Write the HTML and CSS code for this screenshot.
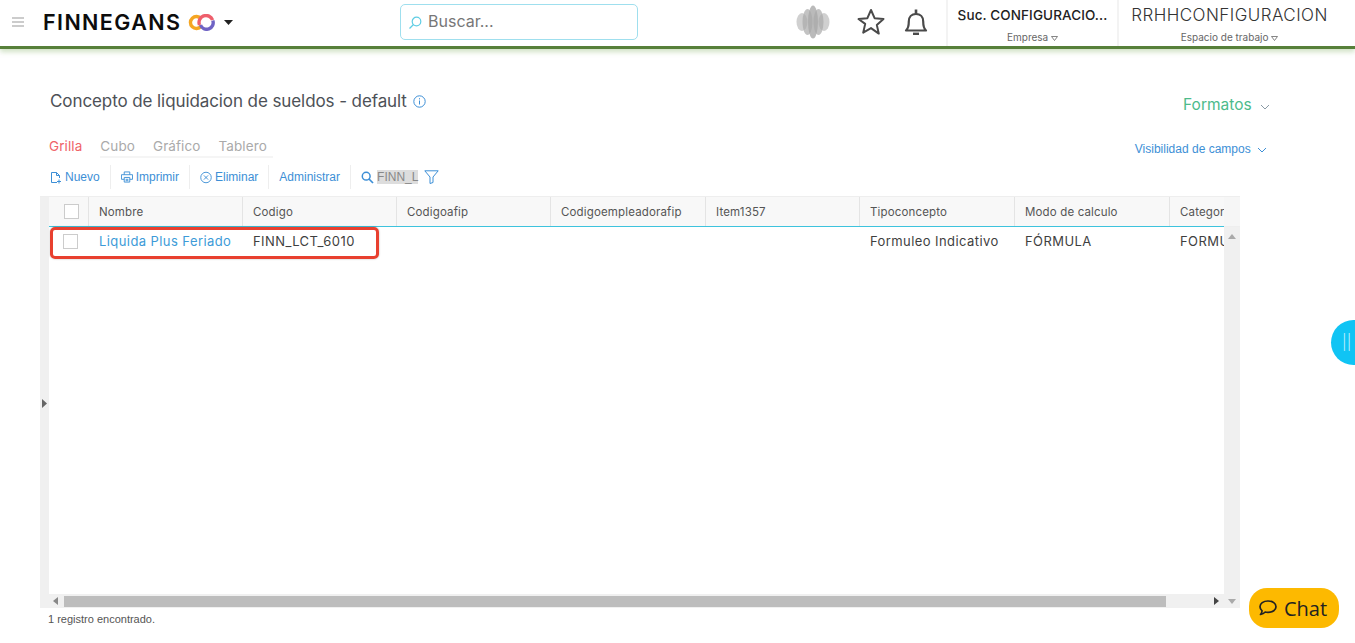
FILE: index.html
```html
<!DOCTYPE html>
<html lang="es">
<head>
<meta charset="utf-8">
<title>Concepto de liquidacion de sueldos</title>
<link rel="stylesheet" href="styles.css">
</head>
<body>
<header class="topbar">
  <div class="brand">
    <svg class="burger" width="12" height="10" viewBox="0 0 12 10"><path d="M0 1h12M0 5h12M0 9h12" stroke="#999" stroke-width="1"/></svg>
    <span class="logo-text">FINNEGANS</span>
    <svg class="logo-mark" width="28" height="17" viewBox="0 0 28 17" fill="none"><path d="M13 4.600A6 6 0 1 0 13 12.400" stroke="#f5a623" stroke-width="3.400"/><path d="M11.500 11A6 6 0 0 1 24.600 6" stroke="#ee5f6c" stroke-width="3.400"/><path d="M24.800 6.500A6 6 0 0 1 12.500 11" stroke="#6f63c4" stroke-width="3.400"/></svg>
    <svg class="caret" width="9" height="5" viewBox="0 0 9 5"><path d="M0 0h9L4.500 5z" fill="#222"/></svg>
  </div>
  <div class="search">
    <svg width="14" height="14" viewBox="0 0 14 14" fill="none"><circle cx="8.500" cy="5.500" r="4.300" stroke="#5fcde4" stroke-width="1.200"/><path d="M5.500 8.500L1.500 12.500" stroke="#5fcde4" stroke-width="1.200"/></svg>
    <span>Buscar...</span>
  </div>
  <div class="top-actions">
    <svg class="orb" width="34" height="34" viewBox="0 0 34 34"><g fill="#a9a9a9"><ellipse cx="6" cy="17" rx="5.500" ry="9" opacity=".55"/><ellipse cx="11.500" cy="17" rx="5" ry="13" opacity=".7"/><ellipse cx="17" cy="17" rx="5" ry="16.500" opacity=".8"/><ellipse cx="22.500" cy="17" rx="5" ry="13" opacity=".7"/><ellipse cx="28" cy="17" rx="5.500" ry="9" opacity=".55"/></g></svg>
    <svg class="star" width="28" height="27" viewBox="0 0 28 27" fill="none"><path d="M14 2l3.600 8.200 8.900.8-6.700 5.900 2 8.700L14 20.100l-7.800 4.500 2-8.700L1.500 11l8.900-.8z" stroke="#4a4a4a" stroke-width="2" stroke-linejoin="round"/></svg>
    <svg class="bell" width="24" height="27" viewBox="0 0 24 27" fill="none"><path d="M2 22.500c2.300-2 2.800-4.500 2.800-9 0-4.500 2.900-7.500 7.200-7.500s7.200 3 7.200 7.500c0 4.500.5 7 2.800 9z" stroke="#4a4a4a" stroke-width="2.200" stroke-linejoin="round"/><path d="M12 1.500v4.500" stroke="#4a4a4a" stroke-width="2.600"/><path d="M9 25.800h6" stroke="#4a4a4a" stroke-width="2.400"/></svg>
  </div>
  <div class="ctx ctx-company">
    <span class="ctx-main ctx-bold">Suc. CONFIGURACIO...</span>
    <span class="ctx-sub">Empresa <svg width="7" height="5" viewBox="0 0 7 5" fill="none"><path d="M.5.500h6L3.500 4.500z" stroke="#666" stroke-width=".8"/></svg></span>
  </div>
  <div class="ctx ctx-space">
    <span class="ctx-main">RRHHCONFIGURACION</span>
    <span class="ctx-sub">Espacio de trabajo <svg width="7" height="5" viewBox="0 0 7 5" fill="none"><path d="M.5.500h6L3.500 4.500z" stroke="#666" stroke-width=".8"/></svg></span>
  </div>
</header>

<main class="page">
  <div class="title-row">
    <h1 class="title">Concepto de liquidacion de sueldos - default</h1>
    <svg class="info" width="13" height="13" viewBox="0 0 13 13" fill="none"><circle cx="6.500" cy="6.500" r="5.700" stroke="#3d8fd6" stroke-width="1"/><path d="M6.500 5.500v4M6.500 3.200v1.200" stroke="#3d8fd6" stroke-width="1"/></svg>
    <span class="formats">Formatos <svg width="10" height="6" viewBox="0 0 10 6" fill="none"><path d="M1 1l4 4 4-4" stroke="#8a9aa5" stroke-width="1"/></svg></span>
  </div>

  <div class="tabs-row">
    <nav class="tabs">
      <span class="tab tab-active">Grilla</span>
      <span class="tab-group"><span class="tab">Cubo</span><span class="tab">Gráfico</span><span class="tab">Tablero</span></span>
    </nav>
    <span class="visibility">Visibilidad de campos <svg width="10" height="6" viewBox="0 0 10 6" fill="none"><path d="M1 1l4 4 4-4" stroke="#3d8fd6" stroke-width="1"/></svg></span>
  </div>

  <div class="toolbar">
    <span class="tool"><svg width="12" height="13" viewBox="0 0 12 13" fill="none"><path d="M7 11.500H1.500v-10h5l3 3V7M6.500 1.500v3h3M9 8.500v4M7 10.500h4" stroke="#3d8fd6" stroke-width="1"/></svg>Nuevo</span>
    <span class="tool"><svg width="12" height="12" viewBox="0 0 13 12" fill="none"><path d="M3.500 3.500v-3h6v3M3.500 8.500h-3v-5h12v5h-3M3.500 6.500h6v5h-6zM5 8.500h3M5 10h3" stroke="#3d8fd6" stroke-width="1"/></svg>Imprimir</span>
    <span class="tool"><svg width="12" height="13" viewBox="0 0 13 13" fill="none"><circle cx="6.500" cy="6.500" r="5.700" stroke="#3d8fd6" stroke-width="1"/><path d="M4.200 4.200l4.600 4.600M8.800 4.200l-4.600 4.600" stroke="#3d8fd6" stroke-width="1"/></svg>Eliminar</span>
    <span class="tool">Administrar</span>
    <span class="tool tool-last"><svg width="13" height="13" viewBox="0 0 13 13" fill="none"><circle cx="5.200" cy="5.200" r="3.900" stroke="#3d8fd6" stroke-width="1.500"/><path d="M8 8l4 4" stroke="#3d8fd6" stroke-width="1.700"/></svg><span class="filter-value">FINN_L</span><svg class="funnel" width="15" height="14" viewBox="0 0 15 14" fill="none"><path d="M.8.800h13.400L9 7v5.500l-3 1V7z" stroke="#3d8fd6" stroke-width="1"/></svg></span>
  </div>

  <section class="grid-wrap">
    <div class="grid-side"><svg width="5" height="9" viewBox="0 0 5 9"><path d="M0 0l5 4.500L0 9z" fill="#666"/></svg></div>
    <div class="grid-body">
      <div class="grid-view">
        <div class="row head-row">
          <div class="cell cell-check"><span class="check"></span></div>
          <div class="cell">Nombre</div>
          <div class="cell">Codigo</div>
          <div class="cell">Codigoafip</div>
          <div class="cell">Codigoempleadorafip</div>
          <div class="cell">Item1357</div>
          <div class="cell">Tipoconcepto</div>
          <div class="cell">Modo de calculo</div>
          <div class="cell cell-clip">Categoria</div>
        </div>
        <div class="row data-row">
          <div class="cell cell-check"><span class="check"></span></div>
          <div class="cell cell-link">Liquida Plus Feriado</div>
          <div class="cell">FINN_LCT_6010</div>
          <div class="cell"></div>
          <div class="cell"></div>
          <div class="cell"></div>
          <div class="cell">Formuleo Indicativo</div>
          <div class="cell">FÓRMULA</div>
          <div class="cell cell-clip">FORMULA</div>
        </div>
        <div class="highlight"></div>
      </div>
      <div class="vscroll">
        <div class="vscroll-head"></div>
        <svg class="arrow-up" width="8" height="5" viewBox="0 0 8 5"><path d="M0 5l4-5 4 5z" fill="#aaa"/></svg>
      </div>
      <div class="hscroll">
        <svg width="5" height="8" viewBox="0 0 5 8"><path d="M5 0v8L0 4z" fill="#888"/></svg>
        <div class="hscroll-track"><div class="hscroll-thumb"></div></div>
        <svg width="5" height="8" viewBox="0 0 5 8"><path d="M0 0v8l5-4z" fill="#444"/></svg>
        <svg class="arrow-down" width="8" height="5" viewBox="0 0 8 5"><path d="M0 0l4 5 4-5z" fill="#aaa"/></svg>
      </div>
    </div>
  </section>
  <p class="status">1 registro encontrado.</p>
</main>

<div class="side-pill"><span>||</span></div>
<div class="chat">
  <svg width="20" height="18" viewBox="0 0 20 18" fill="none"><path d="M10 2c4.700 0 8 2.500 8 5.700s-3.300 5.700-8 5.700c-1 0-2-.1-2.800-.4-1 1-2.500 2-4.700 2.500 1-1.100 1.500-2.300 1.600-3.700C2.900 10.800 2 9.300 2 7.700 2 4.500 5.300 2 10 2z" stroke="#222" stroke-width="1.700" stroke-linejoin="round"/></svg>
  <span>Chat</span>
</div>
</body>
</html>
```
FILE: styles.css
```css
* { box-sizing: border-box; }
html, body { margin: 0; height: 100%; overflow: hidden; }
body {
  position: relative;
  background: #fff;
  font-family: "Inter", "Liberation Sans", sans-serif;
  color: #444;
}

/* Top bar */
.topbar {
  display: flex;
  align-items: stretch;
  height: 49px;
  background: #fff;
  border-bottom: 3px solid #57803a;
  box-shadow: 0 3px 5px rgba(120, 170, 90, .35);
}
.brand {
  display: flex;
  align-items: center;
  width: 400px;
  padding: 0 0 2px 12px;
}
.burger { margin-right: 19px; }
.logo-text {
  font-size: 21.500px;
  font-weight: 600;
  color: #0c0c0c;
  letter-spacing: 1.400px;
  width: 140px;
  white-space: nowrap;
}
.logo-mark { margin-left: 5px; }
.caret { margin-left: 8px; }
.search {
  display: flex;
  align-items: center;
  gap: 6px;
  width: 238px;
  height: 36px;
  margin-top: 4px;
  padding: 0 0 2px 7px;
  border: 1px solid #9fdfee;
  border-radius: 5px;
  font-size: 16px;
  color: #777;
}
.search svg { margin-top: 4px; }
.top-actions {
  display: flex;
  align-items: center;
  width: 310px;
  padding: 0 0 3px 158px;
  border-right: 2px solid #f3f3f3;
}
.orb { flex: none; margin-right: 27px; }
.star { flex: none; margin-right: 19px; }
.bell { flex: none; }
.ctx {
  display: flex;
  flex-direction: column;
  align-items: center;
  white-space: nowrap;
  padding-top: 7px;
}
.ctx-company { width: 171px; border-right: 2px solid #f3f3f3; }
.ctx-space { width: 217px; }
.ctx-main { font-size: 14px; line-height: 17px; }
.ctx-space .ctx-main { font-size: 17px; font-weight: 300; letter-spacing: .45px; color: #333; margin-right: -4px; }
.ctx-bold { font-weight: 500; color: #222; font-size: 13.500px; letter-spacing: .1px; }
.ctx-sub { margin-top: 7px; font-size: 10px; line-height: 12px; color: #666; }
.ctx-space .ctx-sub { margin-right: -4px; }

/* Page */
.page { padding: 39px 0 0 40px; }
.title-row {
  display: flex;
  align-items: center;
  height: 26px;
  padding-left: 10px;
  width: 1230px;
}
.title {
  margin: 0;
  font-size: 17px;
  font-weight: 400;
  letter-spacing: -.09px;
  color: #4d5157;
  white-space: nowrap;
}
.info { margin-left: 6px; }
.formats {
  margin-left: auto;
  padding-top: 6px;
  font-size: 15.500px;
  color: #4dbb8b;
  white-space: nowrap;
}
.formats svg { margin-left: 4px; }
.tabs-row {
  display: flex;
  align-items: flex-start;
  justify-content: space-between;
  margin-top: 21px;
  padding-left: 9px;
  width: 1227px;
}
.tabs { display: flex; align-items: flex-start; font-size: 13.500px; letter-spacing: .1px; }
.tab { color: #aaa; white-space: nowrap; }
.tab-active { color: #ef6269; margin-right: 18px; line-height: 22px; }
.tab-group {
  display: flex;
  gap: 18px;
  padding-right: 6px;
  height: 23px;
  line-height: 22px;
  border-bottom: 2px solid #f5f5f5;
}
.visibility {
  padding-top: 7px;
  font: 12px "Liberation Sans", sans-serif;
  color: #3d8fd6;
  white-space: nowrap;
}
.visibility svg { margin-left: 3px; }
.toolbar {
  display: flex;
  align-items: center;
  height: 28px;
  margin-top: 5px;
  padding-left: 10px;
  font: 12px "Liberation Sans", sans-serif;
  color: #3d8fd6;
}
.tool {
  display: flex;
  align-items: center;
  gap: 3px;
  height: 24px;
  padding-right: 10px;
  margin-right: 10px;
  border-right: 1px solid #eee;
  white-space: nowrap;
}
.tool-last { border-right: 0; margin-right: 0; }
.filter-value { background: #ddd; color: #888; line-height: 14px; }
.funnel { margin-left: 3px; }

/* Grid */
.grid-wrap {
  display: flex;
  width: 1200px;
  height: 412px;
  margin-top: 5px;
  border-top: 1px solid #eee;
}
.grid-side {
  display: flex;
  align-items: center;
  flex: none;
  width: 9px;
  padding: 2px 0 0 2px;
  background: #f0f0f0;
}
.grid-body {
  display: grid;
  grid-template-columns: 1175px 16px;
  grid-template-rows: 397px 14px;
  flex: 1;
}
.grid-view { position: relative; overflow: hidden; background: #fff; }
.row {
  display: grid;
  grid-template-columns: 40px 154px 154px 154px 155px 154px 155px 155px 155px;
  font-size: 11.500px;
  letter-spacing: .15px;
  white-space: nowrap;
}
.head-row {
  height: 30px;
  background: #f8f8f8;
  border-bottom: 1px solid #3ec3dd;
}
.head-row .cell {
  display: flex;
  align-items: center;
  padding-left: 10px;
  border-right: 1px solid #e4e4e4;
  color: #555;
}
.data-row { height: 28px; font-size: 13px; letter-spacing: .42px; color: #3f3f3f; }
.data-row .cell {
  display: flex;
  align-items: center;
  padding-left: 10px;
}
.cell-check { padding-left: 15px !important; }
.data-row .cell-check { padding-left: 14px !important; }
.cell-link { color: #3d9bd8; }
.check {
  display: block;
  width: 15px;
  height: 15px;
  border: 1px solid #ccc;
  background: #fff;
}
.highlight {
  position: absolute;
  left: 1px;
  top: 30px;
  width: 329px;
  height: 32px;
  border: 3px solid #e8402f;
  border-radius: 5px;
  box-shadow: 0 0 2px rgba(0,0,0,.3);
}
.vscroll { position: relative; background: #f0f0f0; }
.vscroll-head { height: 30px; background: #f6f6f6; border-bottom: 1px solid #eee; }
.arrow-up { position: absolute; left: 4px; top: 37px; }
.hscroll {
  grid-column: 1 / 3;
  display: flex;
  align-items: center;
  gap: 3px;
  padding: 0 4px;
  background: #f0f0f0;
}
.hscroll-track { flex: 1; height: 11px; padding-left: 3px; }
.hscroll-thumb { width: 1102px; height: 11px; background: #bdbdbd; }
.arrow-down { margin-left: 6px; }
.status {
  margin: 5px 0 0 8px;
  font: 11px/13px "Liberation Sans", sans-serif;
  color: #555;
}

/* Floating */
.side-pill {
  position: absolute;
  right: 0;
  top: 320px;
  width: 24px;
  height: 45px;
  padding: 13px 0 0 11px;
  border-radius: 23px 0 0 23px;
  background: #10c4f4;
  color: #bfefff;
  font-size: 15px;
  line-height: 17px;
  font-weight: 300;
}
.chat {
  position: absolute;
  left: 1249px;
  top: 588px;
  display: flex;
  align-items: center;
  gap: 6px;
  width: 90px;
  height: 40px;
  padding-left: 9px;
  border-radius: 18px;
  background: #fdb900;
  color: #222;
  font-family: "Open Sans", sans-serif;
  font-size: 20px;
  font-weight: 500;
}
```
